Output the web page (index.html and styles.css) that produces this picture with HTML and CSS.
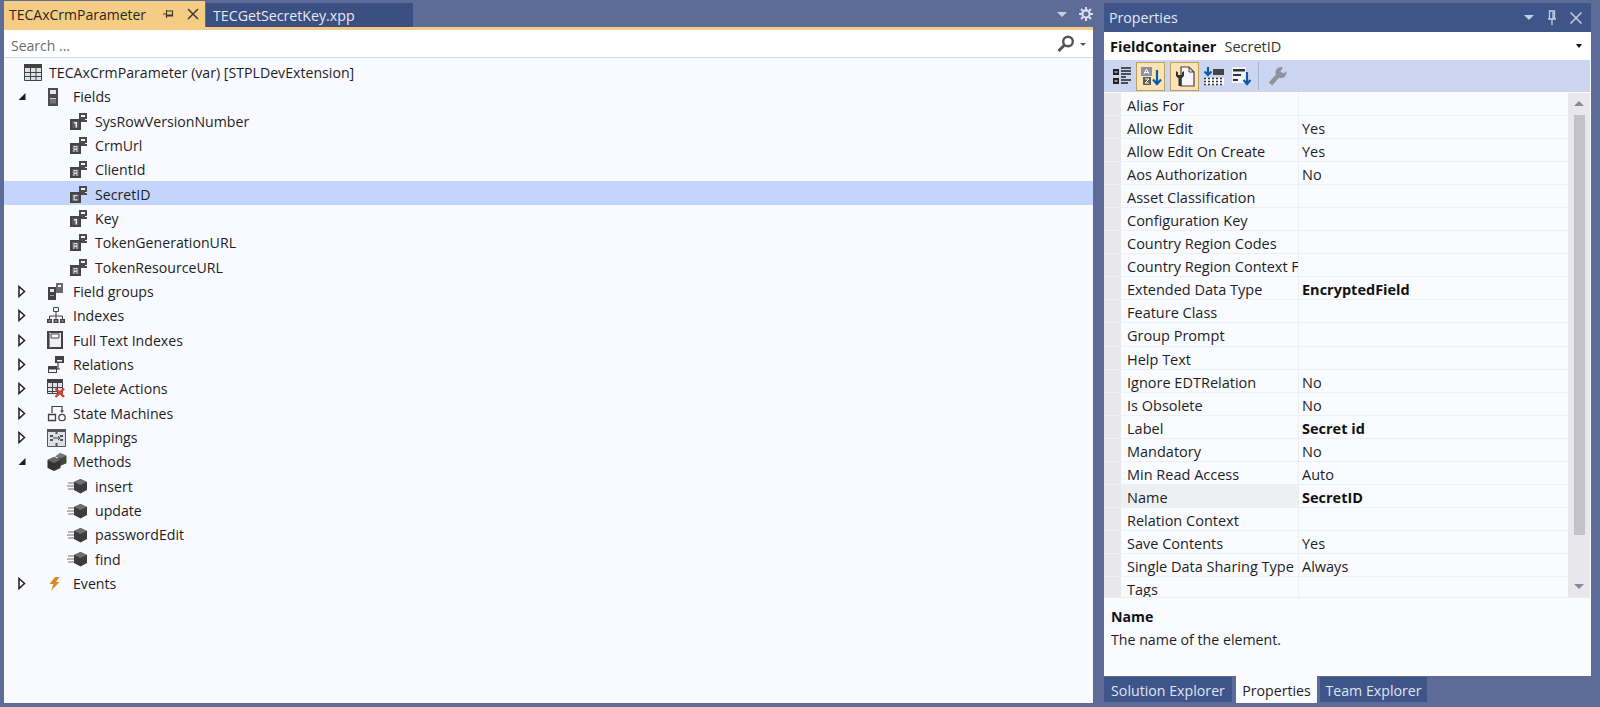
FILE: index.html
```html
<!DOCTYPE html>
<html lang="en">
<head>
<meta charset="utf-8">
<title>TECAxCrmParameter</title>
<link rel="stylesheet" href="styles.css">
</head>
<body>
<svg class="defs" width="0" height="0">
  <symbol id="twist-open" viewBox="0 0 9 9"><path d="M8 1v7H1z" fill="#1e1e1e"/></symbol>
  <symbol id="twist-closed" viewBox="0 0 9 13"><path d="M1.500 1.500l5.500 5-5.500 5z" fill="#fff" stroke="#1e1e1e" stroke-width="1.500"/></symbol>
  <symbol id="field-base" viewBox="0 0 17 17"><path d="M9 0h8v9H9z" fill="#4c4c4c"/><path d="M11 2h4v2h-4zM15 6h2v1h-2z" fill="#f0f2f8"/><path d="M0 6h11v11H0z" fill="#444"/><path d="M2 8h7v7H2z" fill="#5a5a5a"/></symbol>
  <symbol id="i-field-n" viewBox="0 0 17 17"><use href="#field-base"/><path d="M4 9h3v5.500H5.500V10.500H4z" fill="#eceef4"/></symbol>
  <symbol id="i-field-a" viewBox="0 0 17 17"><use href="#field-base"/><path d="M3.500 9h4v6H6.500v-2h-2v2h-1zM4.500 10v1.500h2V10z" fill="#d8dae2"/></symbol>
  <symbol id="i-field-c" viewBox="0 0 17 17"><use href="#field-base"/><path d="M3.500 9h4v1.200H4.700v3.100h2.800v1.200h-4z" fill="#d8dae2"/></symbol>
  <symbol id="i-fields" viewBox="0 0 12 18"><path d="M1 0h10v18H1z" fill="#4c4c4c"/><path d="M3 2h6v4H3z" fill="#e6e8ef"/><path d="M3 10.500h6v5H3z" fill="#777"/><path d="M3 10h6v1H3z" fill="#c8cad2"/></symbol>
  <symbol id="i-table" viewBox="0 0 18 17"><path d="M.5.500h17v16H.5z" fill="#dfe1e8" stroke="#424242"/><path d="M0 0h18v4H0zM6 4h1v13H6zM11.500 4h1v13h-1zM0 8h18v1H0zM0 12h18v1H0z" fill="#424242"/></symbol>
  <symbol id="i-groups" viewBox="0 0 17 17"><path d="M9 0h7v10H9z" fill="#6b6b6b"/><path d="M11 2h3v2h-3z" fill="#f5f6fb"/><path d="M1 4h8v13H1z" fill="#424242"/><path d="M3 6h4v3H3z" fill="#e4e6ee"/><path d="M3 12h4v1H3z" fill="#999"/></symbol>
  <symbol id="i-index" viewBox="0 0 18 17"><path d="M6.500.500h5v4h-5z" fill="none" stroke="#424242"/><path d="M9 5v4M2.500 12V9h13v3M9 9v3" fill="none" stroke="#424242"/><path d="M0 12h5v4H0zM6.500 12h5v4h-5zM13 12h5v4h-5z" fill="#424242"/><path d="M1.500 13.500h2v1h-2zM8 13.500h2v1H8zM14.500 13.500h2v1h-2z" fill="#ccc"/></symbol>
  <symbol id="i-fulltext" viewBox="0 0 16 18"><path d="M1 1h14v16H1z" fill="#eef0f6" stroke="#424242" stroke-width="2"/><path d="M4 3h8v4H4z" fill="#f8f9ff" stroke="#424242"/><path d="M2 1h1v16H2z" fill="#888"/></symbol>
  <symbol id="i-relations" viewBox="0 0 18 17"><path d="M8 0h9v7H8z" fill="#424242"/><path d="M10 4h5v1.500h-5z" fill="#f5f6fb"/><path d="M1 10h9v7H1z" fill="#424242"/><path d="M2 13.500h7V16H2z" fill="#f5f6fb"/><path d="M11 7v6" stroke="#424242" stroke-width="1.200" fill="none"/><path d="M10 13h3" stroke="#424242" fill="none"/></symbol>
  <symbol id="i-delete" viewBox="0 0 18 19"><path d="M.5.500h15v14H.5z" fill="#e2e4ea" stroke="#424242"/><path d="M0 0h16v4H0zM5 4h1v11H5zM10 4h1v11h-1zM0 8h16v1H0zM0 12h16v1H0z" fill="#424242"/><path d="M8.500 9.500l8.500 8.500M17 9.500L8.500 18" stroke="#d0402c" stroke-width="2.400" fill="none"/></symbol>
  <symbol id="i-state" viewBox="0 0 19 17"><path d="M1.500 9.500h7v6h-7z" fill="none" stroke="#424242" stroke-width="1.300"/><circle cx="15" cy="12.500" r="3.200" fill="none" stroke="#424242" stroke-width="1.300"/><path d="M5 8V1.500h10V6" fill="none" stroke="#424242" stroke-width="1.200"/><path d="M13 5.500h4L15 8z" fill="#424242"/></symbol>
  <symbol id="i-map" viewBox="0 0 19 18"><path d="M.5.500h18v17H.5z" fill="#dcdfe8" stroke="#555"/><path d="M0 0h19v3H0zM8.500 0h2v5h-2zM8.500 14h2v4h-2z" fill="#555"/><path d="M3 6h3v2H3zM3 10h3v2H3zM13 6h3v2h-3zM13 10h3v2h-3z" fill="#555"/><path d="M6 9h7M11 7l2 2-2 2" stroke="#424242" fill="none"/></symbol>
  <symbol id="i-methods" viewBox="0 0 20 18"><path d="M13 0l6.500 2.800v7.400L13 13l-2-1V5z" fill="#444"/><path d="M7 4l6.500 3v8L7 18 .5 15V7z" fill="#333"/><path d="M7 4l6.500 3L7 10 .5 7z" fill="#666"/><path d="M13 0l6.500 2.800L13 5.600 8 3.500z" fill="#777"/></symbol>
  <symbol id="i-method" viewBox="0 0 20 16"><path d="M1 5h6M0 8h7M1 11h6" stroke="#a0a0a0" stroke-width="1.500" fill="none"/><path d="M13.500 1l6.500 3v8l-6.500 3.500L7 12V4z" fill="#3c3c3c"/><path d="M13.500 1L20 4l-6.500 3L7 4z" fill="#6e6e6e"/></symbol>
  <symbol id="i-events" viewBox="0 0 11 14"><path d="M6 0h4.500L7 5h3.500L2 14l2.500-7H.5z" fill="#d98a27"/></symbol>
  <symbol id="i-search" viewBox="0 0 18 17"><circle cx="11" cy="6.500" r="4.800" fill="none" stroke="#555" stroke-width="2.400"/><path d="M7.500 10L1.500 16" stroke="#555" stroke-width="3" fill="none"/></symbol>
  <symbol id="i-gear" viewBox="0 0 14 14"><circle cx="7" cy="7" r="3.600" fill="none" stroke="#d8deee" stroke-width="2.200"/><path d="M7 0v3M7 11v3M0 7h3M11 7h3M2 2l2 2M10 10l2 2M12 2l-2 2M4 10l-2 2" stroke="#d8deee" stroke-width="2" fill="none"/></symbol>
</svg>

<div class="app">
  <main class="editor">
    <div class="doc-tabs">
      <div class="doc-tab active">
        <span class="doc-tab-name">TECAxCrmParameter</span>
        <svg class="pin-h" width="12" height="10" viewBox="0 0 12 10"><path d="M0 5h3.500M3.500 1v8M4 2h5.500v5H4M4 6h6" fill="none" stroke="#3f3a2a" stroke-width="1.100"/></svg>
        <svg class="close-x" width="12" height="12" viewBox="0 0 12 12"><path d="M1 1l10 10M11 1L1 11" stroke="#3f3a2a" stroke-width="1.500" fill="none"/></svg>
      </div>
      <div class="doc-tab inactive">TECGetSecretKey.xpp</div>
      <div class="doc-tools">
        <span class="arrow-down"></span>
        <svg class="gear" width="14" height="14"><use href="#i-gear"/></svg>
      </div>
    </div>
    <div class="accent-line"></div>
    <div class="search">
      <span class="search-hint">Search ...</span>
      <svg class="search-icon" width="18" height="17"><use href="#i-search"/></svg>
      <span class="search-caret"></span>
    </div>
    <div class="tree">
      <div class="row root"><svg class="ico" width="18" height="17"><use href="#i-table"/></svg><span>TECAxCrmParameter (var) [STPLDevExtension]</span></div>
      <div class="row l1"><svg class="twist" width="9" height="9"><use href="#twist-open"/></svg><span class="cell"><svg width="12" height="18"><use href="#i-fields"/></svg></span><span>Fields</span></div>
      <div class="row l2"><svg class="ico" width="17" height="17"><use href="#i-field-n"/></svg><span>SysRowVersionNumber</span></div>
      <div class="row l2"><svg class="ico" width="17" height="17"><use href="#i-field-a"/></svg><span>CrmUrl</span></div>
      <div class="row l2"><svg class="ico" width="17" height="17"><use href="#i-field-a"/></svg><span>ClientId</span></div>
      <div class="row l2 selected"><svg class="ico" width="17" height="17"><use href="#i-field-c"/></svg><span>SecretID</span></div>
      <div class="row l2"><svg class="ico" width="17" height="17"><use href="#i-field-n"/></svg><span>Key</span></div>
      <div class="row l2"><svg class="ico" width="17" height="17"><use href="#i-field-a"/></svg><span>TokenGenerationURL</span></div>
      <div class="row l2"><svg class="ico" width="17" height="17"><use href="#i-field-a"/></svg><span>TokenResourceURL</span></div>
      <div class="row l1"><svg class="twist" width="9" height="13"><use href="#twist-closed"/></svg><span class="cell"><svg width="17" height="17"><use href="#i-groups"/></svg></span><span>Field groups</span></div>
      <div class="row l1"><svg class="twist" width="9" height="13"><use href="#twist-closed"/></svg><span class="cell"><svg width="18" height="17"><use href="#i-index"/></svg></span><span>Indexes</span></div>
      <div class="row l1"><svg class="twist" width="9" height="13"><use href="#twist-closed"/></svg><span class="cell"><svg width="16" height="18"><use href="#i-fulltext"/></svg></span><span>Full Text Indexes</span></div>
      <div class="row l1"><svg class="twist" width="9" height="13"><use href="#twist-closed"/></svg><span class="cell"><svg width="18" height="17"><use href="#i-relations"/></svg></span><span>Relations</span></div>
      <div class="row l1"><svg class="twist" width="9" height="13"><use href="#twist-closed"/></svg><span class="cell"><svg width="18" height="19"><use href="#i-delete"/></svg></span><span>Delete Actions</span></div>
      <div class="row l1"><svg class="twist" width="9" height="13"><use href="#twist-closed"/></svg><span class="cell"><svg width="19" height="17"><use href="#i-state"/></svg></span><span>State Machines</span></div>
      <div class="row l1"><svg class="twist" width="9" height="13"><use href="#twist-closed"/></svg><span class="cell"><svg width="19" height="18"><use href="#i-map"/></svg></span><span>Mappings</span></div>
      <div class="row l1"><svg class="twist" width="9" height="9"><use href="#twist-open"/></svg><span class="cell"><svg width="20" height="18"><use href="#i-methods"/></svg></span><span>Methods</span></div>
      <div class="row l2m"><svg class="ico" width="20" height="16"><use href="#i-method"/></svg><span>insert</span></div>
      <div class="row l2m"><svg class="ico" width="20" height="16"><use href="#i-method"/></svg><span>update</span></div>
      <div class="row l2m"><svg class="ico" width="20" height="16"><use href="#i-method"/></svg><span>passwordEdit</span></div>
      <div class="row l2m"><svg class="ico" width="20" height="16"><use href="#i-method"/></svg><span>find</span></div>
      <div class="row l1"><svg class="twist" width="9" height="13"><use href="#twist-closed"/></svg><span class="cell ev"><svg width="11" height="14"><use href="#i-events"/></svg></span><span>Events</span></div>
    </div>
  </main>

  <aside class="props">
    <div class="props-body">
      <header class="props-title">
        <span class="props-title-text">Properties</span>
        <span class="arrow-down"></span>
        <svg width="10" height="16" viewBox="0 0 10 16"><path d="M2.500 1h5v8h-5zM1 9h8M5 9v6M6 2v7" fill="none" stroke="#c5cee6" stroke-width="1.300"/></svg>
        <svg width="12" height="12" viewBox="0 0 12 12"><path d="M.5.500l11 11M11.500.500l-11 11" stroke="#c5cee6" stroke-width="1.500" fill="none"/></svg>
      </header>
      <div class="combo">
        <b>FieldContainer</b><span class="combo-val">SecretID</span><span class="combo-caret"></span>
      </div>
      <div class="toolbar">
        <span class="tb">
          <svg width="20" height="19" viewBox="0 0 20 19"><path d="M1 2h6v6H1zM1 11h6v6H1z" fill="#222"/><path d="M2.500 4.500h3v1h-3zM2.500 13.500h3v1h-3z" fill="#fff"/><path d="M9 1h10M9 4h10M9 7h10M9 10h5M9 13h10M9 16h7" stroke="#222" stroke-width="1.300" fill="none"/></svg>
        </span>
        <span class="tb on">
          <svg width="22" height="21" viewBox="0 0 22 21"><path d="M1 1h11v9H1z" fill="#8d919c"/><path d="M4 8l2.500-5L9 8M5 6.500h3" stroke="#fff" fill="none"/><path d="M3 11h8v8H3z" fill="#5b5b5b"/><path d="M5 13h4l-4 4h4" stroke="#fff" fill="none"/><path d="M17 4v14M13 13.500l4 4.500 4-4.500" stroke="#0e5aa6" stroke-width="2.200" fill="none"/></svg>
        </span>
        <span class="tb-gap"></span>
        <span class="tb on">
          <svg width="20" height="21" viewBox="0 0 20 21"><path d="M6 1h8l5 5v14H6z" fill="#f6f6fa" stroke="#444" stroke-width="1.200"/><path d="M14 1v5h5" fill="none" stroke="#444"/><path d="M1 5v5l2.500 2.500V20h3v-7.500L9 10V5L7 6.500V9H3V6.500z" fill="#333"/></svg>
        </span>
        <span class="tb">
          <svg width="22" height="20" viewBox="0 0 22 20"><path d="M1 12h20v7H1z" fill="#f7f8fc"/><path d="M10 3h11v6H10z" fill="#444"/><path d="M5 1v8M1.500 5.500L5 9l3.500-3.500" stroke="#0e5aa6" stroke-width="2.200" fill="none"/><path d="M1 12.500h20M1 15.500h20M1 18.500h20" stroke="#333" stroke-width="1.400" stroke-dasharray="2 2" fill="none"/></svg>
        </span>
        <span class="tb">
          <svg width="21" height="20" viewBox="0 0 21 20"><path d="M0 1h14v16H0z" fill="#f7f8fc"/><path d="M1 3h12v2.500H1z" fill="#333"/><path d="M1 8h8v2H1zM1 13h5v2H1z" fill="#333"/><path d="M15 6v12M11.500 14L15 18l3.500-4" stroke="#0e5aa6" stroke-width="2.200" fill="none"/></svg>
        </span>
        <span class="tb-sep"></span>
        <span class="tb">
          <svg width="20" height="20" viewBox="0 0 20 20"><path d="M2.500 18l7-8" stroke="#8f939d" stroke-width="4.500" fill="none"/><circle cx="13" cy="6.500" r="5.500" fill="#8f939d"/><path d="M12.500 5.500l3-5h4v4l-4 3z" fill="#ccd5f0"/></svg>
        </span>
      </div>
      <div class="grid-wrap">
        <div class="grid">
          <div class="pr"><span class="pn">Alias For</span><span class="pv"></span></div>
          <div class="pr"><span class="pn">Allow Edit</span><span class="pv">Yes</span></div>
          <div class="pr"><span class="pn">Allow Edit On Create</span><span class="pv">Yes</span></div>
          <div class="pr"><span class="pn">Aos Authorization</span><span class="pv">No</span></div>
          <div class="pr"><span class="pn">Asset Classification</span><span class="pv"></span></div>
          <div class="pr"><span class="pn">Configuration Key</span><span class="pv"></span></div>
          <div class="pr"><span class="pn">Country Region Codes</span><span class="pv"></span></div>
          <div class="pr"><span class="pn">Country Region Context Field</span><span class="pv"></span></div>
          <div class="pr"><span class="pn">Extended Data Type</span><span class="pv strong">EncryptedField</span></div>
          <div class="pr"><span class="pn">Feature Class</span><span class="pv"></span></div>
          <div class="pr"><span class="pn">Group Prompt</span><span class="pv"></span></div>
          <div class="pr"><span class="pn">Help Text</span><span class="pv"></span></div>
          <div class="pr"><span class="pn">Ignore EDTRelation</span><span class="pv">No</span></div>
          <div class="pr"><span class="pn">Is Obsolete</span><span class="pv">No</span></div>
          <div class="pr"><span class="pn">Label</span><span class="pv strong">Secret id</span></div>
          <div class="pr"><span class="pn">Mandatory</span><span class="pv">No</span></div>
          <div class="pr"><span class="pn">Min Read Access</span><span class="pv">Auto</span></div>
          <div class="pr current"><span class="pn">Name</span><span class="pv strong">SecretID</span></div>
          <div class="pr"><span class="pn">Relation Context</span><span class="pv"></span></div>
          <div class="pr"><span class="pn">Save Contents</span><span class="pv">Yes</span></div>
          <div class="pr"><span class="pn">Single Data Sharing Type</span><span class="pv">Always</span></div>
          <div class="pr"><span class="pn">Tags</span><span class="pv"></span></div>
        </div>
        <div class="scrollbar">
          <span class="sb-up"></span>
          <span class="sb-thumb"></span>
          <span class="sb-down"></span>
        </div>
      </div>
      <div class="desc">
        <div class="desc-title">Name</div>
        <div>The name of the element.</div>
      </div>
    </div>
    <nav class="tool-tabs">
      <span class="tool-tab solution">Solution Explorer</span>
      <span class="tool-tab current">Properties</span>
      <span class="tool-tab team">Team Explorer</span>
    </nav>
  </aside>
</div>
</body>
</html>
```
FILE: styles.css
```css
html, body {
  margin: 0;
  height: 100%;
  background: #5d6b99;
  overflow: hidden;
}
body {
  font-family: "Open Sans", "Noto Sans", "Liberation Sans", sans-serif;
  font-size: 14px;
  color: #1e1e1e;
}
.defs { position: absolute; }
.app {
  height: 707px;
  box-sizing: border-box;
  padding: 1px 9px 4px 4px;
  display: flex;
  gap: 11px;
}
svg { filter: blur(.3px); }

/* editor */
.editor {
  width: 1089px;
  display: flex;
  flex-direction: column;
  flex: none;
}
.doc-tabs {
  height: 26px;
  display: flex;
  align-items: flex-end;
  flex: none;
}
.doc-tab {
  display: flex;
  align-items: center;
  box-sizing: border-box;
  font-size: 14px;
}
.doc-tab.active {
  width: 201px;
  height: 26px;
  padding: 0 6px 0 5px;
  background: #f5cc84;
  color: #2a2618;
}
.doc-tab-name { flex: 1; }
.pin-h { margin-right: 12px; }
.doc-tab.inactive {
  width: 207px;
  height: 24px;
  margin: 0 0 0 1px;
  padding-left: 7px;
  background: #3b4f81;
  color: #e6eaf5;
  font-size: 14.2px;
}
.doc-tools {
  margin-left: auto;
  height: 26px;
  display: flex;
  align-items: center;
  gap: 12px;
}
.arrow-down {
  width: 0;
  height: 0;
  border: 5px solid transparent;
  border-top: 5px solid #c5cee6;
  border-bottom: 0;
}
.accent-line { height: 3px; background: #f5cc84; flex: none; }
.search {
  height: 28px;
  flex: none;
  display: flex;
  align-items: center;
  background: #fff;
  border-bottom: 1px solid #d5d9e6;
  box-sizing: border-box;
  padding: 0 5px 0 7px;
}
.search-hint { flex: 1; color: #6d6d6d; padding-top: 3px; }
.search-icon { margin-right: 5px; }
.search-caret {
  border: 3px solid transparent;
  border-top: 3px solid #555;
  border-bottom: 0;
  margin: 1px 2px 0 0;
}
.tree {
  flex: 1;
  background: #f9faff;
  padding-top: 1px;
  font-size: 14.15px;
}
.row {
  height: 24.33px;
  display: flex;
  align-items: center;
  box-sizing: border-box;
  white-space: nowrap;
  padding-top: 3px;
}
.root { padding-left: 20px; }
.root .ico { margin-right: 7px; }
.l1 { padding-left: 13px; }
.twist { flex: none; width: 10px; margin-right: 21px; }
.cell {
  width: 26px;
  margin-left: -1px;
  display: flex;
  flex: none;
}
.cell.ev { padding-left: 2px; width: 24px; }
.l2 { padding-left: 66px; }
.l2 .ico { margin-right: 8px; }
.l2m { padding-left: 63px; }
.l2m .ico { margin-right: 8px; }
.selected { background: #c3d5fd; }

/* properties */
.props {
  flex: 1;
  display: flex;
  flex-direction: column;
  font-size: 14.5px;
}
.props-body {
  margin-top: 2px;
  height: 673px;
  display: flex;
  flex-direction: column;
  background: #fafbff;
}
.props-title {
  height: 29px;
  flex: none;
  display: flex;
  align-items: center;
  gap: 13px;
  background: #3f5489;
  color: #e3e8f5;
  padding: 0 9px 0 5px;
  box-sizing: border-box;
  font-size: 14.2px;
}
.props-title-text { flex: 1; }
.combo {
  height: 28px;
  flex: none;
  display: flex;
  align-items: center;
  padding: 0 9px 0 6px;
  background: #fff;
  box-sizing: border-box;
  color: #111;
}
.combo-val { margin-left: 8px; flex: 1; color: #333; }
.combo-caret {
  border: 3px solid transparent;
  border-top: 4px solid #111;
  border-bottom: 0;
}
.toolbar {
  height: 32px;
  flex: none;
  display: flex;
  align-items: center;
  background: #ccd5f0;
  padding: 0 0 0 3px;
  box-sizing: border-box;
  margin-right: 1px;
}
.tb {
  width: 29px;
  height: 29px;
  box-sizing: border-box;
  display: flex;
  align-items: center;
  justify-content: center;
  border: 1px solid transparent;
}
.tb.on { background: #fbe3b4; border-color: #c0a060; }
.tb-gap { width: 5px; }
.tb-sep { width: 1px; height: 28px; background: #aab4d2; margin: 0 4px 0 1px; }
.grid-wrap {
  height: 505px;
  flex: none;
  display: flex;
  overflow: hidden;
  border-bottom: 1px solid #eceef5;
  box-sizing: border-box;
  background: #fafbff;
  margin-right: 1px;
  margin-top: 1px;
}
.grid { flex: 1; min-width: 0; overflow: hidden; }
.pr {
  display: flex;
  height: 23.05px;
  box-sizing: border-box;
  border-bottom: 1px solid #eeeff5;
  line-height: 26px;
}
.pn {
  width: 195px;
  box-sizing: border-box;
  padding-left: 23px;
  background: linear-gradient(to right, #e8e8ec 17px, transparent 17px);
  border-right: 1px solid #eeeff5;
  white-space: nowrap;
  overflow: hidden;
  flex: none;
}
.pv { padding-left: 3px; }
.strong { font-weight: 700; color: #111; }
.current .pn { background: linear-gradient(to right, #e8e8ec 17px, #eeeff3 17px); }
.scrollbar {
  width: 22px;
  flex: none;
  display: flex;
  flex-direction: column;
  align-items: center;
  background: #e8e8ec;
}
.sb-up {
  margin-top: 8px;
  border: 5px solid transparent;
  border-bottom: 5px solid #868999;
  border-top: 0;
}
.sb-thumb {
  width: 11px;
  height: 420px;
  margin-top: 9px;
  background: #c2c3c9;
}
.sb-down {
  margin-top: 49px;
  border: 5px solid transparent;
  border-top: 5px solid #868999;
  border-bottom: 0;
}
.desc {
  flex: 1;
  padding: 7px 7px;
  line-height: 23px;
  font-size: 14.2px;
}
.desc-title { font-weight: 700; color: #111; }
.tool-tabs {
  display: flex;
  flex: none;
  height: 26px;
  margin-top: 1px;
  font-size: 14.2px;
}
.tool-tab {
  display: flex;
  align-items: center;
  justify-content: center;
  height: 25px;
  box-sizing: border-box;
  padding-top: 2px;
  background: #3f5489;
  color: #dfe5f3;
  white-space: nowrap;
}
.tool-tab.solution { width: 128px; }
.tool-tab.current {
  width: 81px;
  height: 27px;
  margin: -1px 3px 0 4px;
  background: #fafbff;
  color: #1e1e1e;
}
.tool-tab.team { width: 107px; }
```
